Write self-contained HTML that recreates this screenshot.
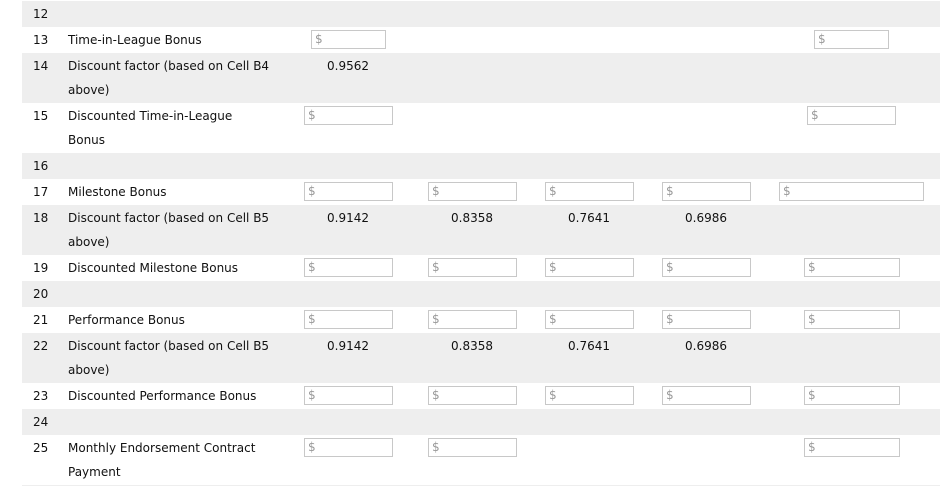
<!DOCTYPE html>
<html><head><style>
body{margin:0;width:949px;height:487px;background:#fff;position:relative;overflow:hidden;font-family:"DejaVu Sans","Liberation Sans",sans-serif;font-size:12px;color:#111}
.r{position:absolute;left:22px;width:918px}
.g{background:#eeeeee}
.t{position:absolute;line-height:24px;white-space:nowrap}
.i{position:absolute;border:1px solid #c8c8c8;background:#fff;box-sizing:border-box;height:19px}
.i::before{content:"$";position:absolute;left:3px;top:1px;font-size:12px;color:#999;line-height:15px}
</style></head><body>
<div class="r g" style="top:1px;height:26px"></div>
<div class="r g" style="top:53px;height:50px"></div>
<div class="r g" style="top:153px;height:26px"></div>
<div class="r g" style="top:205px;height:50px"></div>
<div class="r g" style="top:281px;height:26px"></div>
<div class="r g" style="top:333px;height:50px"></div>
<div class="r g" style="top:409px;height:26px"></div>
<div class="r" style="top:485px;height:1px;background:#eee"></div>

<div class="t" style="left:33px;top:2px">12</div>
<div class="t" style="left:33px;top:28px">13</div><div class="t" style="left:68px;top:28px">Time-in-League Bonus</div>
<div class="t" style="left:33px;top:54px">14</div><div class="t" style="left:68px;top:54px">Discount factor (based on Cell B4<br>above)</div>
<div class="t" style="left:33px;top:104px">15</div><div class="t" style="left:68px;top:104px">Discounted Time-in-League<br>Bonus</div>
<div class="t" style="left:33px;top:154px">16</div>
<div class="t" style="left:33px;top:180px">17</div><div class="t" style="left:68px;top:180px">Milestone Bonus</div>
<div class="t" style="left:33px;top:206px">18</div><div class="t" style="left:68px;top:206px">Discount factor (based on Cell B5<br>above)</div>
<div class="t" style="left:33px;top:256px">19</div><div class="t" style="left:68px;top:256px">Discounted Milestone Bonus</div>
<div class="t" style="left:33px;top:282px">20</div>
<div class="t" style="left:33px;top:308px">21</div><div class="t" style="left:68px;top:308px">Performance Bonus</div>
<div class="t" style="left:33px;top:334px">22</div><div class="t" style="left:68px;top:334px">Discount factor (based on Cell B5<br>above)</div>
<div class="t" style="left:33px;top:384px">23</div><div class="t" style="left:68px;top:384px">Discounted Performance Bonus</div>
<div class="t" style="left:33px;top:410px">24</div>
<div class="t" style="left:33px;top:436px">25</div><div class="t" style="left:68px;top:436px">Monthly Endorsement Contract<br>Payment</div>

<div class="t" style="left:327px;top:54px">0.9562</div>
<div class="t" style="left:327px;top:206px">0.9142</div><div class="t" style="left:451px;top:206px">0.8358</div><div class="t" style="left:568px;top:206px">0.7641</div><div class="t" style="left:685px;top:206px">0.6986</div>
<div class="t" style="left:327px;top:334px">0.9142</div><div class="t" style="left:451px;top:334px">0.8358</div><div class="t" style="left:568px;top:334px">0.7641</div><div class="t" style="left:685px;top:334px">0.6986</div>

<div class="i" style="left:311px;top:30px;width:75px"></div><div class="i" style="left:814px;top:30px;width:75px"></div>
<div class="i" style="left:304px;top:106px;width:89px"></div><div class="i" style="left:807px;top:106px;width:89px"></div>

<div class="i" style="left:304px;top:182px;width:89px"></div><div class="i" style="left:428px;top:182px;width:89px"></div><div class="i" style="left:545px;top:182px;width:89px"></div><div class="i" style="left:662px;top:182px;width:89px"></div><div class="i" style="left:779px;top:182px;width:145px"></div>
<div class="i" style="left:304px;top:258px;width:89px"></div><div class="i" style="left:428px;top:258px;width:89px"></div><div class="i" style="left:545px;top:258px;width:89px"></div><div class="i" style="left:662px;top:258px;width:89px"></div><div class="i" style="left:804px;top:258px;width:96px"></div>
<div class="i" style="left:304px;top:310px;width:89px"></div><div class="i" style="left:428px;top:310px;width:89px"></div><div class="i" style="left:545px;top:310px;width:89px"></div><div class="i" style="left:662px;top:310px;width:89px"></div><div class="i" style="left:804px;top:310px;width:96px"></div>
<div class="i" style="left:304px;top:386px;width:89px"></div><div class="i" style="left:428px;top:386px;width:89px"></div><div class="i" style="left:545px;top:386px;width:89px"></div><div class="i" style="left:662px;top:386px;width:89px"></div><div class="i" style="left:804px;top:386px;width:96px"></div>
<div class="i" style="left:304px;top:438px;width:89px"></div><div class="i" style="left:428px;top:438px;width:89px"></div><div class="i" style="left:804px;top:438px;width:96px"></div>
</body></html>
